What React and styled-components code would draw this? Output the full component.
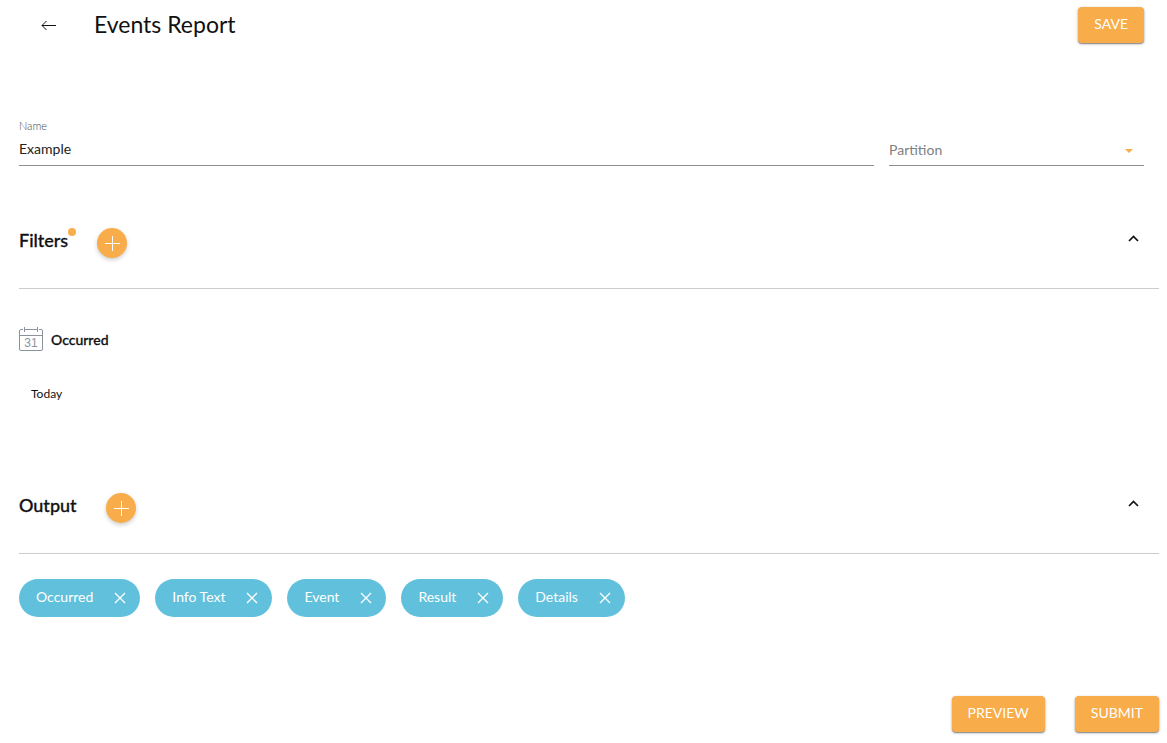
import { useState } from "react";
import styled, { createGlobalStyle } from "styled-components";

const GlobalStyle = createGlobalStyle`
  * {
    box-sizing: border-box;
  }
  body {
    margin: 0;
    background: white;
    color: #111;
    font-family: Lato, "Open Sans", sans-serif;
    font-size: 14px;
  }
  button, input, select {
    font-family: inherit;
  }
`;

const Page = styled.div`
  padding: 7px 8px 10px 19px;
`;

const Header = styled.header`
  display: flex;
  align-items: center;
  padding-right: 15px;
`;

const BackButton = styled.button`
  display: flex;
  align-items: center;
  justify-content: center;
  width: 30px;
  height: 36px;
  margin: 0 30px 0 15px;
  padding: 0;
  border: none;
  background: none;
  color: #111;
  cursor: pointer;
`;

const PageTitle = styled.h1`
  flex: 1;
  margin: 0;
  padding-bottom: 2px;
  font-size: 23px;
  font-weight: 400;
  line-height: 32px;
`;

const ActionButton = styled.button`
  height: 36px;
  padding: 0 16px 4px;
  border: none;
  border-radius: 4px;
  background: #f9ac4a;
  color: white;
  font-size: 14px;
  text-transform: uppercase;
  box-shadow: 0 1px 3px rgba(0, 0, 0, 0.3), 0 1px 1px rgba(0, 0, 0, 0.3);
  cursor: pointer;
`;

const FormRow = styled.div`
  display: flex;
  align-items: flex-end;
  gap: 15px;
  margin-top: 76px;
  padding-right: 15px;
`;

const NameField = styled.div`
  flex: 1;
`;

const FieldLabel = styled.label`
  display: block;
  color: #444;
  font-size: 11px;
  font-weight: 300;
  line-height: 14px;
`;

const TextInput = styled.input`
  display: block;
  width: 100%;
  height: 33px;
  padding: 0 0 2px;
  border: none;
  border-bottom: 1px solid #8f8f8f;
  background: none;
  color: #222;
  font-size: 14px;
  outline: none;
`;

const SelectField = styled.div`
  position: relative;
  width: 255px;
`;

const Select = styled.select`
  display: block;
  width: 100%;
  height: 32px;
  padding: 0;
  border: none;
  border-bottom: 1px solid #8f8f8f;
  border-radius: 0;
  background: none;
  color: #808080;
  font-size: 14px;
  appearance: none;
  outline: none;
`;

const SelectArrow = styled.svg`
  position: absolute;
  right: 11px;
  top: 15px;
  pointer-events: none;
`;

const SectionHeader = styled.div`
  display: flex;
  align-items: center;
  margin-top: 62px;
  padding: 0 19px 30px 0;
  border-bottom: 1px solid #ccc;
`;

const SectionTitle = styled.h2`
  position: relative;
  margin: 0 29px 0 0;
  padding-bottom: 6px;
  font-size: 18px;
  font-weight: 500;
  line-height: 22px;
  -webkit-text-stroke: 0.3px #111;
`;

const Dot = styled.span`
  position: absolute;
  left: 100%;
  top: -1px;
  width: 8px;
  height: 8px;
  border-radius: 50%;
  background: #f9ac4a;
`;

const AddButton = styled.button`
  display: flex;
  align-items: center;
  justify-content: center;
  width: 30px;
  height: 30px;
  padding: 0;
  border: none;
  border-radius: 50%;
  background: #f9ac4a;
  box-shadow: 0 2px 4px rgba(0, 0, 0, 0.2);
  cursor: pointer;
`;

const CollapseButton = styled.button`
  display: flex;
  margin-left: auto;
  padding: 0 0 8px;
  border: none;
  background: none;
  cursor: pointer;
`;

const FilterItem = styled.div`
  padding: 38px 0 28px;
`;

const FilterTitle = styled.h3`
  display: flex;
  align-items: center;
  gap: 8px;
  margin: 0;
  font-size: 14px;
  font-weight: 500;
  line-height: 24px;
  -webkit-text-stroke: 0.3px #111;
`;

const FilterName = styled.span`
  padding-top: 2px;
  line-height: 22px;
`;

const FilterValue = styled.p`
  margin: 34px 12px 0;
  font-size: 12px;
  line-height: 18px;
`;

const Chips = styled.ul`
  display: flex;
  flex-wrap: wrap;
  gap: 15px;
  margin: 25px 0 0;
  padding: 0;
  list-style: none;
`;

const Chip = styled.li`
  display: flex;
  align-items: center;
  gap: 21px;
  height: 38px;
  padding: 0 14px 0 17px;
  border-radius: 19px;
  background: #61c1dd;
  color: white;
`;

const ChipText = styled.span`
  padding-bottom: 4px;
`;

const ChipRemove = styled.button`
  display: flex;
  padding: 0;
  border: none;
  background: none;
  cursor: pointer;
`;

const Footer = styled.footer`
  display: flex;
  justify-content: flex-end;
  gap: 30px;
  margin-top: 79px;
`;

const CalendarIcon = () => (
  <svg width="24" height="24" viewBox="0 0 24 24" fill="none" stroke="#8a929b">
    <path d="M4 2.5H2a1.5 1.5 0 0 0-1.5 1.5v18a1.5 1.5 0 0 0 1.5 1.5h20a1.5 1.5 0 0 0 1.5-1.5V4a1.5 1.5 0 0 0-1.5-1.5h-2M6 2.5h12M.5 8.5h23M5.5 0v5M18.5 0v5" />
    <text
      x="12"
      y="20"
      fill="#8a929b"
      stroke="none"
      fontFamily="Liberation Sans, sans-serif"
      fontSize="12"
      textAnchor="middle"
    >
      31
    </text>
  </svg>
);

const Section = ({ title, marked, children }) => {
  const [open, setOpen] = useState(true);

  return (
    <section>
      <SectionHeader>
        <SectionTitle>
          {title}
          {marked && <Dot />}
        </SectionTitle>
        <AddButton aria-label={`Add ${title}`}>
          <svg width="16" height="16" viewBox="0 0 16 16" stroke="white">
            <path d="M8.5 1v15M1 8.5h15" />
          </svg>
        </AddButton>
        <CollapseButton
          aria-label={`Toggle ${title}`}
          aria-expanded={open}
          onClick={() => setOpen(!open)}
        >
          <svg width="13" height="8" viewBox="0 0 13 8" fill="none">
            <path d="M2 6l4.5-4.5L11 6" stroke="#111" strokeWidth="1.7" />
          </svg>
        </CollapseButton>
      </SectionHeader>
      {open && children}
    </section>
  );
};

const App = () => {
  const [name, setName] = useState("Example");
  const [columns, setColumns] = useState([
    "Occurred",
    "Info Text",
    "Event",
    "Result",
    "Details",
  ]);

  const removeColumn = (column) =>
    setColumns(columns.filter((item) => item !== column));

  return (
    <Page>
      <GlobalStyle />
      <Header>
        <BackButton aria-label="Back">
          <svg width="16" height="12" viewBox="0 0 16 12" fill="none">
            <path d="M1 6.5h14M5.5 2L1 6.5 5.5 11" stroke="#111" />
          </svg>
        </BackButton>
        <PageTitle>Events Report</PageTitle>
        <ActionButton>Save</ActionButton>
      </Header>
      <FormRow>
        <NameField>
          <FieldLabel htmlFor="name">Name</FieldLabel>
          <TextInput
            id="name"
            value={name}
            onChange={(e) => setName(e.target.value)}
          />
        </NameField>
        <SelectField>
          <Select aria-label="Partition" defaultValue="">
            <option value="">Partition</option>
          </Select>
          <SelectArrow width="8" height="4" viewBox="0 0 8 4">
            <path d="M0 0h8L4 4z" fill="#f9ac4a" />
          </SelectArrow>
        </SelectField>
      </FormRow>
      <Section title="Filters" marked>
        <FilterItem>
          <FilterTitle>
            <CalendarIcon />
            <FilterName>Occurred</FilterName>
          </FilterTitle>
          <FilterValue>Today</FilterValue>
        </FilterItem>
      </Section>
      <Section title="Output">
        <Chips>
          {columns.map((column) => (
            <Chip key={column}>
              <ChipText>{column}</ChipText>
              <ChipRemove
                aria-label={`Remove ${column}`}
                onClick={() => removeColumn(column)}
              >
                <svg width="12" height="12" viewBox="0 0 12 12">
                  <path d="M1 1l10 10M11 1L1 11" stroke="white" strokeWidth="1.3" />
                </svg>
              </ChipRemove>
            </Chip>
          ))}
        </Chips>
      </Section>
      <Footer>
        <ActionButton>Preview</ActionButton>
        <ActionButton>Submit</ActionButton>
      </Footer>
    </Page>
  );
};

export default App;
